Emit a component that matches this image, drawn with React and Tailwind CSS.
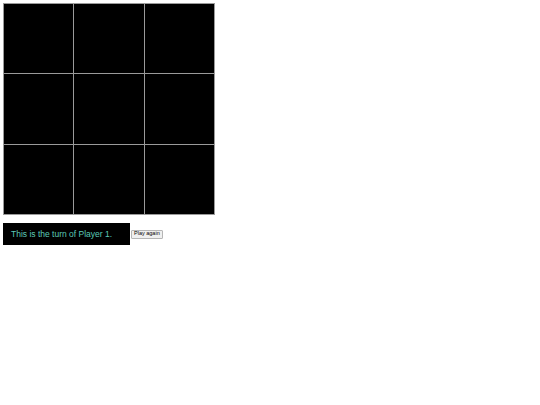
export default function App() {
  const cells = Array.from({ length: 9 });
  return (
    <div className="p-[3px] font-['Liberation_Sans',Arial,sans-serif]">
      <div className="grid grid-cols-[69px_70px_69px] grid-rows-[69px_70px_69px] gap-px w-[212px] h-[212px] border border-[#9a9a9a] bg-[#9a9a9a]">
        {cells.map((_, i) => (
          <div key={i} className="bg-black" />
        ))}
      </div>
      <div className="mt-[8px] flex items-center">
        <div className="w-[127px] h-[22px] bg-black flex items-center pl-[8px] text-[8.5px] text-[#5cc9b6] whitespace-nowrap">
          This is the turn of Player 1.
        </div>
        <button className="ml-px h-[9px] px-[2px] text-[5.5px] leading-none text-black bg-[#efefef] border border-[#b5b5b5] rounded-[1px]">
          Play again
        </button>
      </div>
    </div>
  );
}
